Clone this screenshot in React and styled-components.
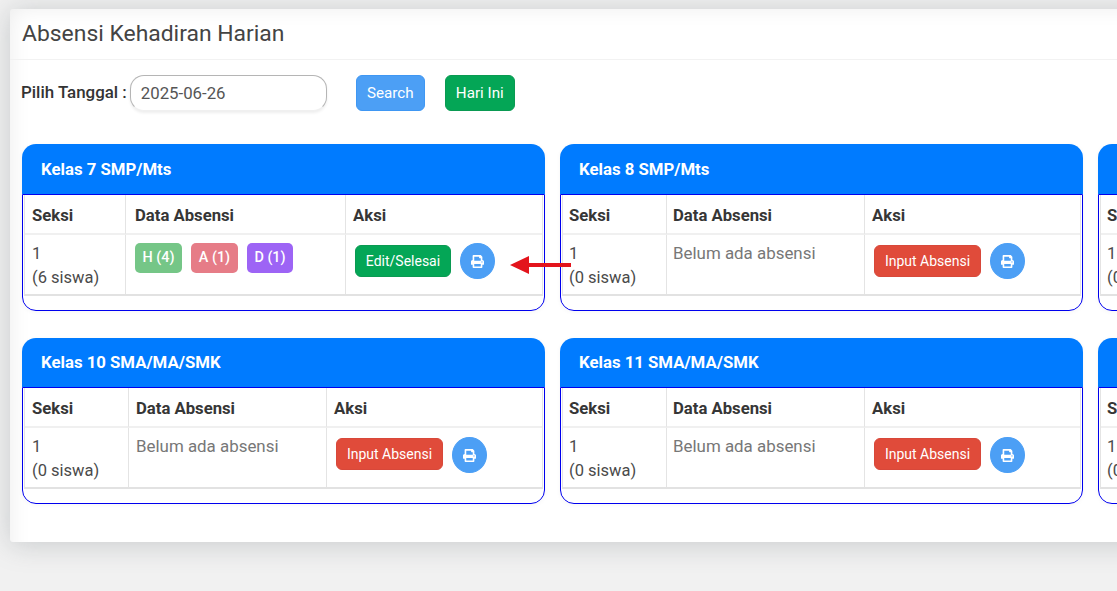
import React from "react";
import styled, { createGlobalStyle } from "styled-components";
import { FaPrint } from "react-icons/fa";

const Global = createGlobalStyle`
  html, body { margin: 0; padding: 0; height: 100%; overflow: hidden; background: #f1f1f1; }
  * { box-sizing: border-box; }
  body { font-family: Roboto, "Liberation Sans", sans-serif; color: #3c3c3c; }
`;

const Page = styled.div`
  position: relative;
  width: 1117px;
  height: 591px;
  overflow: hidden;
  padding: 9px 0 0 10px;
  background: #f1f1f1;
`;
const Panel = styled.section`
  width: 1200px;
  height: 533px;
  background: #fff;
  border-radius: 3px;
  box-shadow: 0 2px 28px rgba(110, 118, 125, 0.32), inset 14px 12px 22px -14px rgba(0, 0, 0, 0.08);
`;
const PanelHead = styled.header`
  height: 51px;
  padding: 12px 12px 0;
  border-bottom: 1px solid #f2f2f2;
`;
const Title = styled.h1`
  margin: 0;
  font-size: 22.9px;
  font-weight: 400;
  line-height: 26px;
  color: #444;
`;
const FilterRow = styled.div`
  display: flex;
  align-items: flex-start;
  padding: 15px 0 0 11px;
  height: 84px;
`;
const Label = styled.label`
  font-size: 16.9px;
  font-weight: 500;
  line-height: 35px;
  color: #333;
  margin-right: 3px;
`;
const DateBox = styled.div`
  width: 197px;
  height: 36px;
  padding: 0 10px;
  border: 1px solid #b5b5b5;
  border-bottom-color: #f0f0f0;
  border-radius: 14px;
  box-shadow: 0 2px 3px rgba(0, 0, 0, 0.07);
  font-size: 16.8px;
  line-height: 35px;
  color: #555;
  background: #fff;
`;
const Btn = styled.button`
  height: ${(p) => p.$h || 36}px;
  width: ${(p) => p.$w}px;
  margin-top: ${(p) => p.$mt || 0}px;
  margin-left: ${(p) => p.$ml || 0}px;
  padding: 0;
  border: 1px solid ${(p) => p.$bd};
  border-radius: 6px;
  background: ${(p) => p.$bg};
  color: #fff;
  font: 400 ${(p) => p.$fs || 15.2}px Roboto, sans-serif;
  white-space: nowrap;
`;
const CardGrid = styled.div`
  display: grid;
  grid-template-columns: repeat(3, 523px);
  column-gap: 15px;
  row-gap: 27px;
  padding-left: 12px;
`;
const Card = styled.article`
  height: ${(p) => p.$h}px;
  display: flex;
  flex-direction: column;
  border-radius: 14px;
  background: #fff;
  box-shadow: 0 1px 5px rgba(0, 0, 0, 0.04);
`;
const CardHead = styled.div`
  height: ${(p) => p.$h}px;
  padding: ${(p) => p.$pt}px 19px 0;
  border-radius: 14px 14px 0 0;
  background: #007bff;
  color: #fff;
  font-size: 16.75px;
  font-weight: 700;
  line-height: 19px;
`;
const CardBody = styled.div`
  flex: 1;
  padding: 0 1px;
  border: 1px solid #0000ee;
  border-radius: 0 0 14px 14px;
`;
const Table = styled.div`
  display: grid;
  grid-template-columns: ${(p) => p.$cols};
  border-left: 1px solid #e4e4e4;
  border-right: 1px solid #e4e4e4;
  border-bottom: 2px solid #e2e2e2;
`;
const Cell = styled.div`
  border-left: ${(p) => (p.$first ? "0" : "1px solid #e4e4e4")};
  padding-left: ${(p) => p.$pl || 8}px;
`;
const HeadCell = styled(Cell)`
  height: 40px;
  padding-top: 11px;
  border-bottom: 2px solid #f0f0f0;
  font-size: 16.7px;
  font-weight: 700;
  line-height: 19px;
  color: #363636;
`;
const BodyCell = styled(Cell)`
  height: 59px;
  font-size: 16.5px;
  line-height: 24px;
  color: #4a4a4a;
`;
const SeksiCell = styled(BodyCell)`
  padding-top: 7px;
`;
const Empty = styled(BodyCell)`
  padding-top: 6px;
  font-size: 16.9px;
  color: #777;
`;
const RowCell = styled(BodyCell)`
  display: flex;
  align-items: flex-start;
  gap: 9px;
  padding-top: 8px;
`;
const Badge = styled.span`
  width: ${(p) => p.$w}px;
  height: 30px;
  border-radius: 5px;
  background: ${(p) => p.$bg};
  color: #fff;
  font-size: 14.4px;
  font-weight: 500;
  line-height: 30px;
  text-align: center;
`;
const CircleBtn = styled.button`
  width: 35px;
  height: 36px;
  margin-top: ${(p) => p.$mt || 0}px;
  padding: 0;
  display: flex;
  align-items: center;
  justify-content: center;
  border: 1px solid #4a9ef5;
  border-radius: 50%;
  background: #4c9ff5;
  color: #fff;
  font-size: 13px;
`;
const Arrow = styled.svg`
  position: absolute;
  left: 510px;
  top: 256px;
`;

const cards = [
  { title: "Kelas 7 SMP/Mts", h: 167, head: 50, pt: 16, cols: "100px 220px 197px", siswa: 6, filled: true, seksiPl: 7, dataPl: 9, aksiPl: 7, circleMt: 0 },
  { title: "Kelas 8 SMP/Mts", h: 167, head: 50, pt: 16, cols: "103px 198px 216px", siswa: 0, seksiPl: 6, dataPl: 6, aksiPl: 7, circleMt: 0 },
  { title: "Kelas 9 SMP/Mts", h: 167, head: 50, pt: 16, cols: "103px 198px 216px", siswa: 0, seksiPl: 6, dataPl: 6, aksiPl: 7, circleMt: 0 },
  { title: "Kelas 10 SMA/MA/SMK", h: 166, head: 49, pt: 15, cols: "103px 198px 216px", siswa: 0, seksiPl: 7, dataPl: 7, aksiPl: 7, circleMt: 1 },
  { title: "Kelas 11 SMA/MA/SMK", h: 166, head: 49, pt: 15, cols: "103px 198px 216px", siswa: 0, seksiPl: 6, dataPl: 6, aksiPl: 7, circleMt: 1 },
  { title: "Kelas 12 SMA/MA/SMK", h: 166, head: 49, pt: 15, cols: "103px 198px 216px", siswa: 0, seksiPl: 6, dataPl: 6, aksiPl: 7, circleMt: 1 },
];

const ClassCard = ({ c }) => (
  <Card $h={c.h}>
    <CardHead $h={c.head} $pt={c.pt}>{c.title}</CardHead>
    <CardBody>
      <Table $cols={c.cols}>
        <HeadCell $first $pl={c.seksiPl}>Seksi</HeadCell>
        <HeadCell $pl={c.dataPl}>Data Absensi</HeadCell>
        <HeadCell $pl={c.aksiPl}>Aksi</HeadCell>
        <SeksiCell $first $pl={c.seksiPl}>1<br />({c.siswa} siswa)</SeksiCell>
        {c.filled ? (
          <RowCell $pl={9}>
            <Badge $w={47} $bg="#75c687">H (4)</Badge>
            <Badge $w={47} $bg="#e67c87">A (1)</Badge>
            <Badge $w={46} $bg="#9d64f5">D (1)</Badge>
          </RowCell>
        ) : (
          <Empty $pl={c.dataPl}>Belum ada absensi</Empty>
        )}
        <RowCell $pl={9}>
          {c.filled ? (
            <Btn $w={96} $h={32} $mt={2} $fs={14} $bg="#04a656" $bd="#0a9a52">Edit/Selesai</Btn>
          ) : (
            <Btn $w={107} $h={32} $mt={2} $fs={14} $bg="#e04b3a" $bd="#d8483a">Input Absensi</Btn>
          )}
          <CircleBtn $mt={c.circleMt} aria-label="Cetak"><FaPrint /></CircleBtn>
        </RowCell>
      </Table>
    </CardBody>
  </Card>
);

export default function App() {
  return (
    <Page>
      <Global />
      <Panel>
        <PanelHead><Title>Absensi Kehadiran Harian</Title></PanelHead>
        <FilterRow>
          <Label>Pilih Tanggal :</Label>
          <DateBox>2025-06-26</DateBox>
          <Btn $w={69} $ml={29} $bg="#4c9ff5" $bd="#3f97f3">Search</Btn>
          <Btn $w={70} $ml={20} $bg="#04a656" $bd="#0a9a52">Hari Ini</Btn>
        </FilterRow>
        <CardGrid>
          {cards.map((c) => <ClassCard key={c.title} c={c} />)}
        </CardGrid>
      </Panel>
      <Arrow width="62" height="18" viewBox="0 0 62 18" aria-hidden="true">
        <path fill="#e3141c" d="M0 9 L19 0 V7 H61 V11 H19 V18 Z" />
      </Arrow>
    </Page>
  );
}
